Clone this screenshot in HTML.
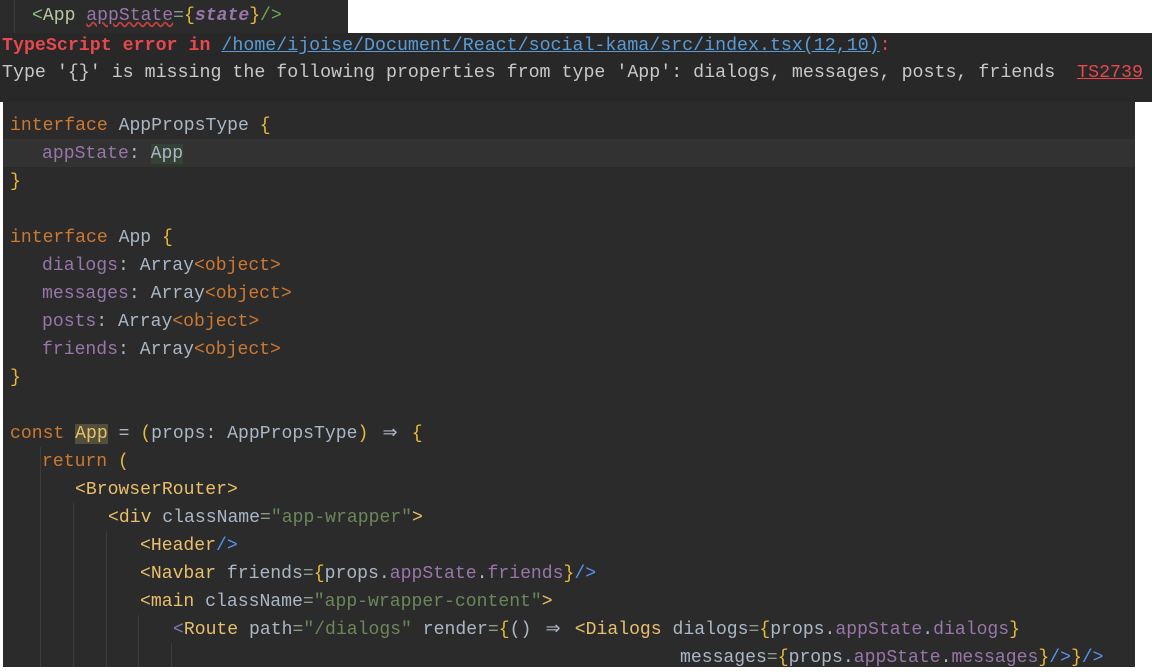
<!DOCTYPE html>
<html><head><meta charset="utf-8"><style>
body{margin:0;width:1152px;height:667px;background:#fff;position:relative;overflow:hidden;font-family:"Liberation Mono",monospace}
.top{position:absolute;left:0;top:0;width:348px;height:33px;background:#2b2b2b}
.err{position:absolute;left:0;top:33px;width:1152px;height:69px;background:#282828;font-size:18.3px;color:#c8c8c8}
.err div{position:absolute;left:2px;white-space:pre}
.code{position:absolute;left:3px;top:102px;width:1132px;height:565px;background:#2b2b2b}
.hl{position:absolute;left:0;top:37px;width:1132px;height:28px;background:#323232}
.l{position:absolute;white-space:pre;font-size:18.1px;line-height:28px;height:28px;color:#a9b7c6}
.code .l{margin-top:2px}
.k{color:#cc7832}.p{color:#9876aa}.t{color:#e8bf6a}.s{color:#6a8759}.b{color:#e8ba36}.bl{color:#5394ec}.g{color:#8a9a8a}
.ar{display:inline-block;width:2ch;text-align:center}
.guide{position:absolute;width:1px;background:#3c3c3c}
</style></head><body>
<div class="top"><div class="guide" style="left:14px;top:0;height:33px"></div>
<div class="l" style="left:32px;top:2px"><span style="color:#8fbf7f">&lt;</span><span style="color:#b8c8a0">App</span> <span class="p" style="text-decoration:underline wavy #c04040">appState</span><span class="g">=</span><span class="b">{</span><b><i class="p">state</i></b><span class="b">}</span><span style="color:#6aa84f">/&gt;</span></div></div>
<div class="err">
<div style="top:1px;line-height:24px"><b style="color:#e5484d">TypeScript error in </b><span style="color:#5b9bd5;text-decoration:underline">/home/ijoise/Document/React/social-kama/src/index.tsx(12,10)</span><span style="color:#e5484d">:</span></div>
<div style="top:28px;line-height:24px">Type '{}' is missing the following properties from type 'App': dialogs, messages, posts, friends  <span style="color:#e5484d;text-decoration:underline">TS2739</span></div>
</div>
<div class="code">
<div class="hl"></div>
<div class="guide" style="left:37px;top:345px;height:220px"></div>
<div class="guide" style="left:70px;top:401px;height:164px"></div>
<div class="guide" style="left:103px;top:429px;height:136px"></div>
<div class="guide" style="left:135px;top:513px;height:52px"></div>
<div class="guide" style="left:168px;top:541px;height:24px"></div>
<div class="l" style="left:7px;top:8px"><span class="k">interface</span> AppPropsType <span class="b">{</span></div>
<div class="l" style="left:39px;top:36px"><span class="p">appState</span>: <span style="background:#344134">App</span></div>
<div class="l" style="left:7px;top:64px"><span class="b">}</span></div>
<div class="l" style="left:7px;top:120px"><span class="k">interface</span> App <span class="b">{</span></div>
<div class="l" style="left:39px;top:148px"><span class="p">dialogs</span>: Array<span class="k">&lt;object&gt;</span></div>
<div class="l" style="left:39px;top:176px"><span class="p">messages</span>: Array<span class="k">&lt;object&gt;</span></div>
<div class="l" style="left:39px;top:204px"><span class="p">posts</span>: Array<span class="k">&lt;object&gt;</span></div>
<div class="l" style="left:39px;top:232px"><span class="p">friends</span>: Array<span class="k">&lt;object&gt;</span></div>
<div class="l" style="left:7px;top:260px"><span class="b">}</span></div>
<div class="l" style="left:7px;top:316px"><span class="k">const</span> <span style="background:#52503a;color:#e8bf6a">App</span> = <span class="b">(</span>props: AppPropsType<span class="b">)</span> <span class="ar">⇒</span> <span class="b">{</span></div>
<div class="l" style="left:39px;top:344px"><span class="k">return</span> <span class="b">(</span></div>
<div class="l" style="left:72px;top:372px"><span class="t">&lt;BrowserRouter&gt;</span></div>
<div class="l" style="left:105px;top:400px"><span class="t">&lt;div</span> className<span class="g">=</span><span class="s">"app-wrapper"</span><span class="t">&gt;</span></div>
<div class="l" style="left:137px;top:428px"><span class="t">&lt;Header</span><span class="bl">/&gt;</span></div>
<div class="l" style="left:137px;top:456px"><span class="t">&lt;Navbar</span> friends<span class="g">=</span><span class="b">{</span>props.<span class="p">appState</span>.<span class="p">friends</span><span class="b">}</span><span class="bl">/&gt;</span></div>
<div class="l" style="left:137px;top:484px"><span class="t">&lt;main</span> className<span class="g">=</span><span class="s">"app-wrapper-content"</span><span class="t">&gt;</span></div>
<div class="l" style="left:170px;top:512px"><span style="color:#7a7ab0">&lt;</span><span class="t">Route</span> path<span class="g">=</span><span class="s">"/dialogs"</span> render<span class="g">=</span><span class="b">{</span>() <span class="ar">⇒</span> <span class="t">&lt;Dialogs</span> dialogs<span class="g">=</span><span class="b">{</span>props.<span class="p">appState</span>.<span class="p">dialogs</span><span class="b">}</span></div>
<div class="l" style="left:677px;top:540px">messages<span class="g">=</span><span class="b">{</span>props.<span class="p">appState</span>.<span class="p">messages</span><span class="b">}</span><span class="bl">/&gt;</span><span class="b">}</span><span class="bl">/&gt;</span></div>
</div>
</body></html>
